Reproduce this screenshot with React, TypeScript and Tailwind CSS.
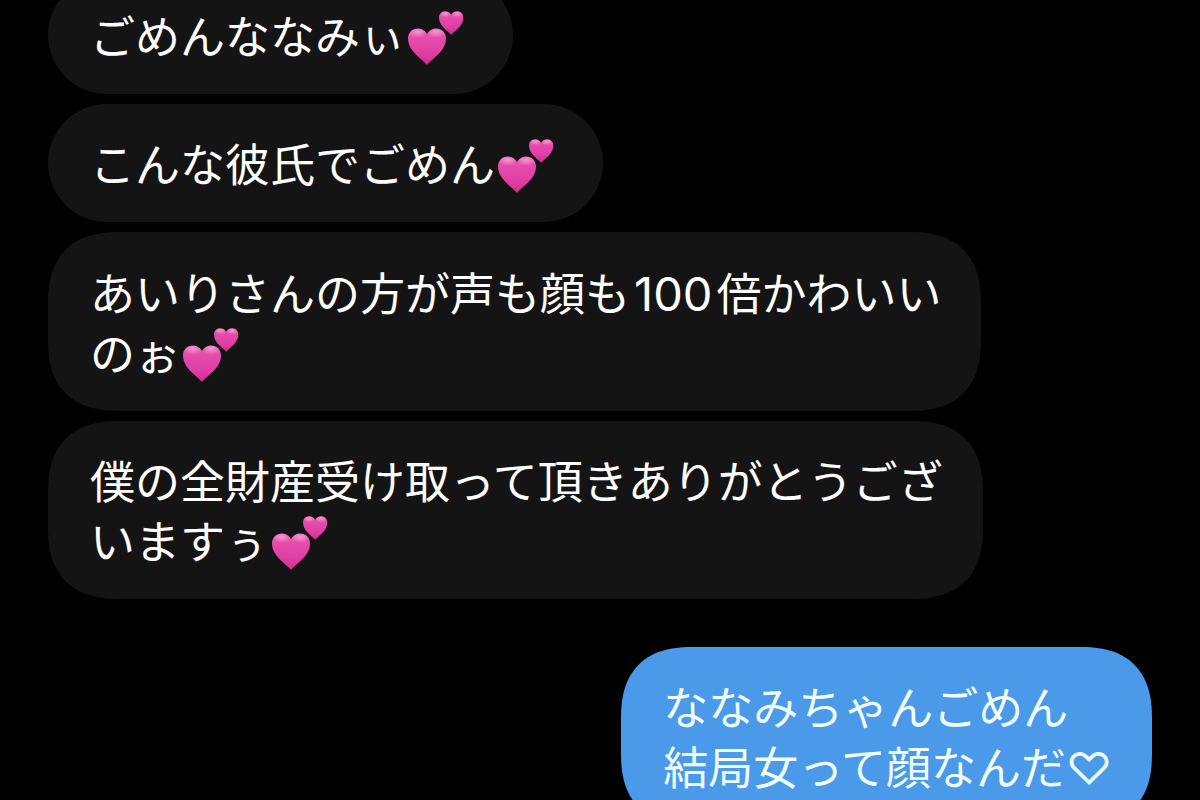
import type { ReactNode } from 'react';

function TwoHearts() {
  return (
    <svg
      role="img"
      aria-label="💕"
      viewBox="0 0 56 54"
      className="ml-[3px] mr-[9px] inline-block h-[54px] w-[56px] align-[-11px]"
    >
      <defs>
        <linearGradient id="heartFill" x1="0" y1="0" x2="0" y2="1">
          <stop offset="0" stopColor="#ec68b8" />
          <stop offset="0.25" stopColor="#e54cac" />
          <stop offset="0.65" stopColor="#e13fa5" />
          <stop offset="1" stopColor="#cf2f90" />
        </linearGradient>
        <radialGradient id="heartShine" cx="0.5" cy="0.3" r="0.6">
          <stop offset="0" stopColor="#ffb9e2" stopOpacity="0.6" />
          <stop offset="1" stopColor="#ffb9e2" stopOpacity="0" />
        </radialGradient>
        <g id="heartShape">
          <path
            d="M19 37C15.5 32 0 23.5 0 10.500C0 4.500 4.300 0.500 9.800 0.500C14 0.500 17.500 3 19 6C20.500 3 24 0.500 28.200 0.500C33.700 0.500 38 4.500 38 10.500C38 23.500 22.500 32 19 37Z"
            fill="url(#heartFill)"
          />
          <ellipse cx="9.800" cy="6" rx="8" ry="5" fill="url(#heartShine)" />
          <ellipse cx="28.200" cy="6" rx="8" ry="5" fill="url(#heartShine)" />
        </g>
      </defs>
      <use href="#heartShape" transform="translate(0 17)" />
      <use href="#heartShape" transform="translate(31 0) scale(0.64)" />
    </svg>
  );
}

type BubbleProps = {
  mine?: boolean;
  tall?: boolean;
  children: ReactNode;
};

function Bubble({ mine = false, tall = false, children }: BubbleProps) {
  const tone = mine ? 'self-end bg-[#4b99e9] text-[#f0ffff]' : 'self-start bg-[#141414] text-white';
  const shape = tall
    ? 'rounded-[72px] [corner-shape:superellipse(1.3)]'
    : 'rounded-[64px]';
  return (
    <li
      className={`${tone} ${shape} pt-8 pr-10 pb-[26px] pl-[42px] text-[45px] leading-[60px] whitespace-nowrap`}
    >
      {children}
    </li>
  );
}

export default function App() {
  return (
    <main
      lang="ja"
      className="h-screen overflow-hidden bg-black px-12 font-['Inter','Noto_Sans_CJK_JP',sans-serif]"
    >
      <ul className="-mt-6 flex flex-col gap-[10px]">
        <Bubble>
          ごめんななみぃ
          <TwoHearts />
        </Bubble>
        <Bubble>
          こんな彼氏でごめん
          <TwoHearts />
        </Bubble>
        <Bubble tall>
          あいりさんの方が声も顔も<span className="mx-1 text-[47px]">100</span>倍かわいい
          <br />
          のぉ
          <TwoHearts />
        </Bubble>
        <Bubble tall>
          僕の全財産受け取って頂きありがとうござ
          <br />
          いますぅ
          <TwoHearts />
        </Bubble>
      </ul>
      <ul className="mt-12 flex flex-col gap-[10px]">
        <Bubble mine tall>
          ななみちゃんごめん
          <br />
          結局女って顔なんだ♡
        </Bubble>
      </ul>
    </main>
  );
}
